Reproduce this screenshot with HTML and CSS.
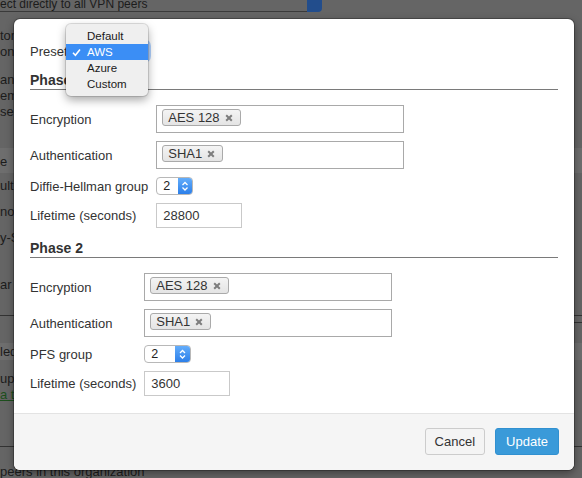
FILE: index.html
```html
<!DOCTYPE html>
<html>
<head>
<meta charset="utf-8">
<link rel="stylesheet" href="styles.css">
</head>
<body>
<div class="bg">
  <div class="bg-select"><div class="bg-select-text">ect directly to all VPN peers</div><div class="bg-select-arrow"></div></div>
  <div class="bg-para bg-p1"><div>tomatic connection</div><div>onnect all peers</div></div>
  <div class="bg-para bg-p2"><div>anual mode for</div><div>embers of this</div><div>se network</div></div>
  <div class="bg-band bg-head">e</div>
  <div class="bg-row">ult</div>
  <div class="bg-row">no</div>
  <div class="bg-row">y-S</div>
  <div class="bg-row bg-ar">ar</div>
  <div class="bg-line bg-l1"></div>
  <div class="bg-line bg-l2"></div>
  <div class="bg-band bg-led">led</div>
  <div class="bg-para bg-p3"><div>upp</div><div><span class="bg-link">a tr</span></div></div>
  <div class="bg-line bg-l3"></div>
  <div class="bg-foot">peers in this organization</div>
</div>

<div class="modal">
  <div class="modal-body">
    <div class="preset-row">
      <span class="label">Preset</span>
      <span class="preset-select"></span>
    </div>

    <h3 class="phase-title">Phase 1</h3>
    <div class="form-grid">
      <span class="label">Encryption</span>
      <div class="tagbox"><span class="tag">AES 128<svg class="tag-x" viewBox="0 0 8 8" width="8" height="8"><path d="M1.2 1.2L6.8 6.8M6.8 1.2L1.2 6.8"/></svg></span></div>
      <span class="label">Authentication</span>
      <div class="tagbox"><span class="tag">SHA1<svg class="tag-x" viewBox="0 0 8 8" width="8" height="8"><path d="M1.2 1.2L6.8 6.8M6.8 1.2L1.2 6.8"/></svg></span></div>
      <span class="label">Diffie-Hellman group</span>
      <div><span class="select sel-dh"><span class="sel-val">2</span><span class="sel-arrow"><svg viewBox="0 0 14 16" width="14" height="16"><path d="M4.5 7L7 4.5L9.5 7M4.5 9.5L7 12L9.5 9.5"/></svg></span></span></div>
      <span class="label">Lifetime (seconds)</span>
      <div><span class="text-input">28800</span></div>
    </div>

    <h3 class="phase-title phase-2">Phase 2</h3>
    <div class="form-grid">
      <span class="label">Encryption</span>
      <div class="tagbox"><span class="tag">AES 128<svg class="tag-x" viewBox="0 0 8 8" width="8" height="8"><path d="M1.2 1.2L6.8 6.8M6.8 1.2L1.2 6.8"/></svg></span></div>
      <span class="label">Authentication</span>
      <div class="tagbox"><span class="tag">SHA1<svg class="tag-x" viewBox="0 0 8 8" width="8" height="8"><path d="M1.2 1.2L6.8 6.8M6.8 1.2L1.2 6.8"/></svg></span></div>
      <span class="label">PFS group</span>
      <div><span class="select sel-pfs"><span class="sel-val">2</span><span class="sel-arrow"><svg viewBox="0 0 15 16" width="15" height="16"><path d="M5 7L7.5 4.5L10 7M5 9.5L7.5 12L10 9.5"/></svg></span></span></div>
      <span class="label">Lifetime (seconds)</span>
      <div><span class="text-input">3600</span></div>
    </div>
  </div>
  <div class="modal-footer">
    <button class="btn btn-cancel">Cancel</button>
    <button class="btn btn-primary">Update</button>
  </div>
</div>

<div class="menu">
  <div class="menu-item">Default</div>
  <div class="menu-item active"><svg class="check" viewBox="0 0 9 9" width="9" height="9"><path d="M1 4.8L3.4 7.2L8 1.5"/></svg>AWS</div>
  <div class="menu-item">Azure</div>
  <div class="menu-item">Custom</div>
</div>
</body>
</html>
```

FILE: styles.css
```css
* { box-sizing: border-box; }
html, body { margin: 0; padding: 0; }
body {
  width: 582px;
  height: 478px;
  overflow: hidden;
  position: relative;
  background: #656565;
  font-family: "Liberation Sans", Arial, Helvetica, sans-serif;
  color: #1c1c1c;
}

/* dimmed page behind the dialog */
.bg { font-size: 13px; white-space: nowrap; }
.bg-select { display: flex; width: 322px; height: 15px; margin-top: -3px; }
.bg-select-text {
  flex: 1;
  font-size: 12px;
  line-height: 14px;
  border-bottom: 1px solid #3a3a3a;
  overflow: hidden;
}
.bg-select-arrow { width: 15px; background: #224d8c; border-radius: 0 0 4px 0; }
.bg-para div { height: 16px; line-height: 16px; }
.bg-p1 { margin-top: 16px; }
.bg-p2 { margin-top: 12px; }
.bg-band { background: #6e6e6e; }
.bg-head { margin-top: 28px; height: 25px; line-height: 27px; }
.bg-row { height: 26px; line-height: 26px; }
.bg-ar { margin-top: 21px; }
.bg-line { height: 1px; background: #333; }
.bg-l1 { margin-top: 17px; }
.bg-l2 { margin-top: 6px; margin-left: 574px; }
.bg-led { margin-top: 20px; height: 17px; line-height: 17px; }
.bg-p3 { margin-top: 11px; }
.bg-link { color: #1d4f1d; text-decoration: underline; }
.bg-l3 { margin-top: 43px; }
.bg-foot { margin-top: 17px; line-height: 16px; }

/* dialog */
.modal {
  position: absolute;
  left: 14px;
  top: 19px;
  width: 560px;
  height: 451px;
  background: #fff;
  border-radius: 6px;
  box-shadow: 0 0 0 1px rgba(0,0,0,0.25), 0 3px 9px rgba(0,0,0,0.4);
  display: flex;
  flex-direction: column;
  overflow: hidden;
  color: #333;
  font-size: 13px;
}
.modal-body { flex: 1; padding: 23px 16px 0 16px; }

.label { line-height: 16px; color: #333; white-space: nowrap; padding-top: 1px; }

.preset-row { display: flex; align-items: center; height: 18px; }
.preset-select {
  margin-left: 8px;
  width: 72px;
  height: 18px;
  border-radius: 4px;
  border: 1px solid #9ec3f5;
  box-shadow: 0 0 0 3px rgba(110, 170, 250, 0.55);
}

.phase-title {
  margin: 12px 0 0 0;
  font-size: 14px;
  line-height: 17px;
  font-weight: bold;
  color: #333;
  border-bottom: 1px solid #7a7a7a;
}

.form-grid {
  margin-top: 15px;
  display: grid;
  grid-template-columns: max-content max-content;
  column-gap: 8px;
  row-gap: 8px;
  align-items: center;
}

.tagbox {
  width: 248px;
  height: 28px;
  border: 1px solid #a9a9a9;
  padding: 3px 5px;
  background: #fff;
}
.tag {
  display: inline-flex;
  align-items: center;
  height: 17px;
  padding: 0 7px 0 5px;
  border: 1px solid #aaa;
  border-radius: 3px;
  background: linear-gradient(#f4f4f4, #e4e4e4);
  line-height: 15px;
  color: #333;
}
.tag-x { margin-left: 5px; }
.tag-x path { stroke: #7d7d7d; stroke-width: 2; fill: none; }

.select {
  display: inline-flex;
  height: 18px;
  border: 1px solid #b8b8b8;
  border-radius: 4px;
  background: #fff;
  overflow: hidden;
  vertical-align: top;
}
.sel-dh { width: 37px; }
.sel-pfs { width: 47px; }
.sel-val { flex: 1; padding-left: 6px; font-size: 12.5px; line-height: 16px; color: #222; }
.sel-arrow {
  display: flex;
  background: linear-gradient(#63adfb, #2c7fe9);
}
.sel-arrow path { stroke: #fff; stroke-width: 1.3; fill: none; }

.text-input {
  display: inline-block;
  width: 86px;
  height: 25px;
  border: 1px solid #c9c9c9;
  padding-left: 6px;
  line-height: 23px;
  color: #333;
  vertical-align: top;
}

.modal-footer {
  height: 57px;
  border-top: 1px solid #e3e3e3;
  background: #f5f5f5;
  display: flex;
  justify-content: flex-end;
  align-items: flex-start;
  gap: 10px;
  padding: 14px 15px 0 0;
}
.btn {
  height: 27px;
  font-family: inherit;
  font-size: 13px;
  border-radius: 3px;
  margin: 0;
  cursor: pointer;
}
.btn-cancel { padding: 0 9px; background: #f4f4f4; border: 1px solid #cccccc; color: #333; }
.btn-primary { padding: 0 10px; background: #3a9ad9; border: 1px solid #3190d0; color: #fff; }

/* open native-style popup menu */
.menu {
  position: absolute;
  left: 66px;
  top: 24px;
  width: 82px;
  padding: 4px 0;
  background: #efefef;
  border-radius: 5px;
  box-shadow: 0 0 0 1px rgba(0,0,0,0.12), 0 4px 10px rgba(0,0,0,0.35);
  font-size: 11.5px;
  color: #1a1a1a;
}
.menu-item { position: relative; height: 16px; line-height: 16px; padding-left: 21px; }
.menu-item.active { background: #3b8ef5; color: #fff; }
.check { position: absolute; left: 6px; top: 4px; }
.check path { stroke: #fff; stroke-width: 1.6; fill: none; }
```
